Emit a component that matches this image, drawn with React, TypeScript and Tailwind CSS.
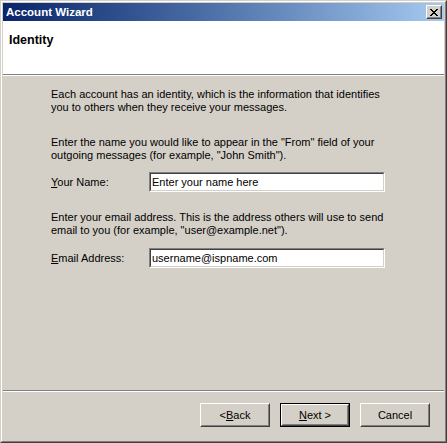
import React from 'react';

const font = { fontFamily: '"Liberation Sans", Arial, sans-serif' };

const Field: React.FC<{ label: React.ReactNode; value: string }> = ({ label, value }) => (
  <div className="flex items-center h-[20px]">
    <label className="w-[98px]">{label}</label>
    <div className="w-[236px] h-[20px] border border-t-[#808080] border-l-[#808080] border-r-white border-b-white">
      <div className="h-full border border-t-[#404040] border-l-[#404040] border-r-[#d4d0c8] border-b-[#d4d0c8] bg-white">
        <input
          className="w-full h-full px-[1px] text-[11px] text-black bg-white outline-none"
          style={font}
          defaultValue={value}
        />
      </div>
    </div>
  </div>
);

const Button: React.FC<{ children: React.ReactNode; primary?: boolean }> = ({ children, primary }) => {
  const inner = (
    <div className="h-full border border-t-white border-l-white border-r-[#404040] border-b-[#404040]">
      <div className="h-full flex items-center justify-center border border-t-[#d4d0c8] border-l-[#d4d0c8] border-r-[#808080] border-b-[#808080] bg-[#d4d0c8]">
        {children}
      </div>
    </div>
  );
  return (
    <button className={`w-[70px] h-[24px] text-[11px] text-black ${primary ? 'border border-black' : ''}`} style={font}>
      {inner}
    </button>
  );
};

const App: React.FC = () => {
  return (
    <div
      className="w-[447px] h-[443px] border border-t-[#d4d0c8] border-l-[#d4d0c8] border-r-[#404040] border-b-[#404040] text-[11px] leading-[13px] text-black"
      style={font}
    >
      <div className="h-full border border-t-white border-l-white border-r-[#808080] border-b-[#808080] bg-[#d4d0c8] p-[1px] flex flex-col">
        {/* title bar */}
        <div className="h-[18px] flex items-center justify-between bg-gradient-to-r from-[#0a246a] to-[#a6caf0] pl-[3px] pr-[2px]">
          <span className="text-white font-bold text-[11.5px]">Account Wizard</span>
          <div className="w-[16px] h-[14px] border border-t-white border-l-white border-r-[#404040] border-b-[#404040]">
            <div className="h-full flex items-center justify-center border border-t-[#d4d0c8] border-l-[#d4d0c8] border-r-[#808080] border-b-[#808080] bg-[#d4d0c8]">
              <svg width="8" height="7" viewBox="0 0 8 7" shapeRendering="crispEdges">
                <path d="M0 0h2v1h-2zM6 0h2v1h-2zM1 1h2v1h-2zM5 1h2v1h-2zM2 2h4v1h-4zM3 3h2v1h-2zM2 4h4v1h-4zM1 5h2v1h-2zM5 5h2v1h-2zM0 6h2v1h-2zM6 6h2v1h-2z" fill="#000" />
              </svg>
            </div>
          </div>
        </div>

        {/* header */}
        <div className="h-[53px] bg-white pt-[13px] pl-[6px] font-bold text-[12.5px]">Identity</div>
        <div className="h-[2px] border-t border-t-[#808080] border-b border-b-white" />

        {/* body */}
        <div className="flex-1 pt-[12px] pl-[48px]">
          <p className="w-[340px]">
            Each account has an identity, which is the information that identifies you to others when they receive your messages.
          </p>
          <p className="w-[340px] mt-[22px]">
            Enter the name you would like to appear in the "From" field of your outgoing messages (for example, "John Smith").
          </p>
          <div className="mt-[10px]">
            <Field label={<><u>Y</u>our Name:</>} value="Enter your name here" />
          </div>
          <p className="w-[340px] mt-[19px]">
            Enter your email address. This is the address others will use to send email to you (for example, "user@example.net").
          </p>
          <div className="mt-[11px]">
            <Field label={<><u>E</u>mail Address:</>} value="username@ispname.com" />
          </div>
        </div>

        <div className="h-[2px] border-t border-t-[#808080] border-b border-b-white" />

        {/* footer */}
        <div className="h-[48px] flex justify-end items-start gap-[10px] pt-[11px] pr-[14px]">
          <Button>&lt; <u>B</u>ack</Button>
          <Button primary><u>N</u>ext &gt;</Button>
          <Button>Cancel</Button>
        </div>
      </div>
    </div>
  );
};

export default App;
